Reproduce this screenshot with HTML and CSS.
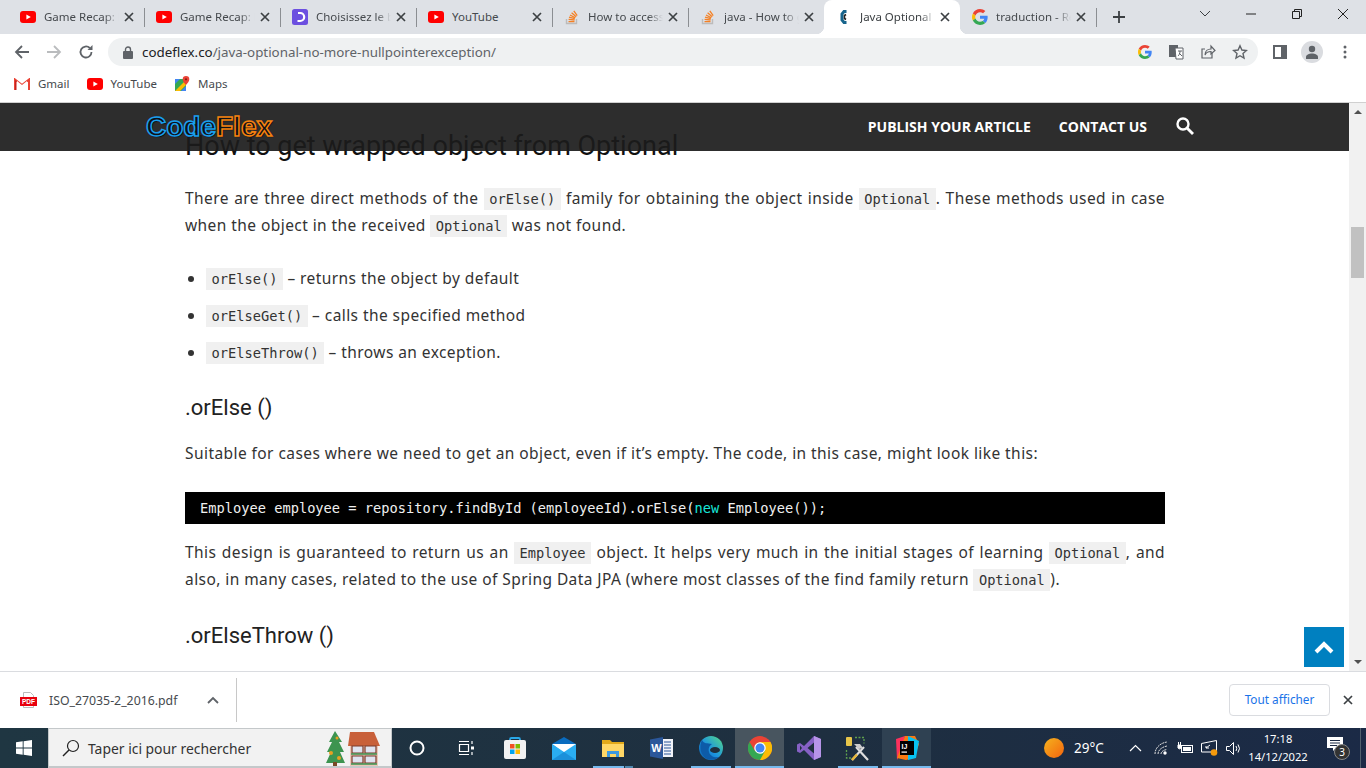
FILE: index.html
```html
<!DOCTYPE html>
<html lang="en">
<head>
    <meta charset="UTF-8">
    <meta name="viewport" content="width=device-width, initial-scale=1.0">
    <title>Java Optional</title>
    <link rel="stylesheet" href="styles.css">
</head>
<body>
    <svg class="defs" width="0" height="0">
        <symbol id="yt" viewBox="0 0 16 12"><rect width="16" height="12" rx="3" fill="#f00"/><path d="M6.4 3.5 10.8 6 6.4 8.5z" fill="#fff"/></symbol>
        <symbol id="so" viewBox="0 0 16 16"><path d="M2.5 10v4.5h10V10" fill="none" stroke="#bcbbbb" stroke-width="1.4"/><path d="M4.5 12.6h6M4.6 10.4l6 .6M5 8.2l5.8 1.5M6 6l5.3 2.8M7.6 3.8l4.6 3.9M9.8 1.8l3.4 4.8" stroke="#f48024" stroke-width="1.3" fill="none"/></symbol>
        <symbol id="g" viewBox="0 0 48 48">
            <path fill="#EA4335" d="M24 9.5c3.54 0 6.71 1.22 9.21 3.6l6.85-6.85C35.9 2.38 30.47 0 24 0 14.62 0 6.51 5.38 2.56 13.22l7.98 6.19C12.43 13.72 17.74 9.5 24 9.5z"/>
            <path fill="#4285F4" d="M46.98 24.55c0-1.57-.15-3.09-.38-4.55H24v9.02h12.94c-.58 2.96-2.26 5.48-4.78 7.18l7.73 6c4.51-4.18 7.09-10.36 7.09-17.65z"/>
            <path fill="#FBBC05" d="M10.53 28.59c-.48-1.45-.76-2.99-.76-4.59s.27-3.14.76-4.59l-7.98-6.19C.92 16.46 0 20.12 0 24c0 3.88.92 7.54 2.56 10.78l7.97-6.19z"/>
            <path fill="#34A853" d="M24 48c6.48 0 11.93-2.13 15.89-5.81l-7.73-6c-2.15 1.45-4.92 2.3-8.16 2.3-6.26 0-11.57-4.22-13.47-9.91l-7.98 6.19C6.51 42.62 14.62 48 24 48z"/>
        </symbol>
        <symbol id="x" viewBox="0 0 10 10"><path d="M1 1l8 8M9 1 1 9" stroke="#3c4043" stroke-width="1.7" fill="none"/></symbol>
    </svg>

    <div class="tabstrip">
        <div class="tab"><svg class="fav" width="16" height="12"><use href="#yt"/></svg><span class="tab-title">Game Recap: Be</span><svg class="tab-x" width="10" height="10"><use href="#x"/></svg></div>
        <div class="tab"><svg class="fav" width="16" height="12"><use href="#yt"/></svg><span class="tab-title">Game Recap: Be</span><svg class="tab-x" width="10" height="10"><use href="#x"/></svg></div>
        <div class="tab"><svg class="fav" width="16" height="16" viewBox="0 0 16 16"><rect width="16" height="16" rx="2.5" fill="#6c4fe0"/><path d="M6 4h2.2a4 4 0 0 1 0 8H5.5" fill="none" stroke="#fff" stroke-width="2.2"/></svg><span class="tab-title">Choisissez le bon</span><svg class="tab-x" width="10" height="10"><use href="#x"/></svg></div>
        <div class="tab"><svg class="fav" width="16" height="12"><use href="#yt"/></svg><span class="tab-title plain">YouTube</span><svg class="tab-x" width="10" height="10"><use href="#x"/></svg></div>
        <div class="tab"><svg class="fav" width="16" height="16"><use href="#so"/></svg><span class="tab-title">How to access the</span><svg class="tab-x" width="10" height="10"><use href="#x"/></svg></div>
        <div class="tab no-sep"><svg class="fav" width="16" height="16"><use href="#so"/></svg><span class="tab-title">java - How to get</span><svg class="tab-x" width="10" height="10"><use href="#x"/></svg></div>
        <div class="tab active"><svg class="fav" width="16" height="16" viewBox="0 0 16 16"><path d="M10.500 2.500H8L6 5v6l2 2.500h2.500" fill="none" stroke="#17648c" stroke-width="3"/><path d="M10 5.500 8.500 6.500v3l1.500 1" fill="none" stroke="#222" stroke-width="1.600"/></svg><span class="tab-title">Java Optional - N</span><svg class="tab-x" width="10" height="10"><use href="#x"/></svg></div>
        <div class="tab"><svg class="fav" width="16" height="16"><use href="#g"/></svg><span class="tab-title">traduction - Rech</span><svg class="tab-x" width="10" height="10"><use href="#x"/></svg></div>
        <svg class="newtab" width="14" height="14" viewBox="0 0 14 14"><path d="M7 1v12M1 7h12" stroke="#3c4043" stroke-width="1.8"/></svg>
        <div class="winctl">
            <svg width="46" height="12" viewBox="0 0 46 12"><path d="M18 3l5 5 5-5" fill="none" stroke="#3c4043"/></svg>
            <svg width="46" height="12" viewBox="0 0 46 12"><path d="M18 6h10" stroke="#222"/></svg>
            <svg width="46" height="12" viewBox="0 0 46 12"><path d="M18.5 3.5h7v7h-7zM20.5 3.500v-2h7v7h-2" fill="none" stroke="#222"/></svg>
            <svg width="46" height="12" viewBox="0 0 46 12"><path d="M18 1l10 10M28 1 18 11" stroke="#222" fill="none"/></svg>
        </div>
    </div>

    <div class="toolbar">
        <svg class="nav-ic" width="16" height="16" viewBox="0 0 16 16"><path d="M15 8H2M8 2 2 8l6 6" fill="none" stroke="#5f6368" stroke-width="1.8"/></svg>
        <svg class="nav-ic" width="16" height="16" viewBox="0 0 16 16"><path d="M1 8h13M8 2l6 6-6 6" fill="none" stroke="#babcbe" stroke-width="1.8"/></svg>
        <svg class="nav-ic" width="16" height="16" viewBox="0 0 16 16"><path d="M13.500 8a5.500 5.500 0 1 1-1.700-4" fill="none" stroke="#5f6368" stroke-width="1.8"/><path d="M14.500 1v5h-5z" fill="#5f6368"/></svg>
        <div class="omnibox">
            <svg width="10" height="13" viewBox="0 0 10 13"><rect y="5" width="10" height="8" rx="1" fill="#5f6368"/><path d="M2.500 5.500V3.500a2.500 2.500 0 0 1 5 0v2" fill="none" stroke="#5f6368" stroke-width="1.400"/></svg>
            <span class="url"><b>codeflex.co</b>/java-optional-no-more-nullpointerexception/</span>
            <svg class="omni-ic" width="14" height="14"><use href="#g"/></svg>
            <svg class="omni-ic" width="16" height="16" viewBox="0 0 16 16"><rect x="1" y="1" width="9" height="12" fill="#5f6368"/><path d="M7 4h8v11H8z" fill="#fff" stroke="#5f6368"/><path d="M3 8l2-4 2 4M10 7h4M12 7c0 3-1 4-2 5M11 9l3 3" fill="none" stroke="#5f6368"/></svg>
            <svg class="omni-ic" width="16" height="16" viewBox="0 0 16 16"><path d="M12 9v5H2V5h3" fill="none" stroke="#5f6368" stroke-width="1.200"/><path d="M5 11c0-4 3-6 6-6V2l4 4.500L11 10V7.500c-3 0-5 1-6 3.500z" fill="none" stroke="#5f6368" stroke-width="1.200"/></svg>
            <svg class="omni-ic" width="16" height="16" viewBox="0 0 16 16"><path d="M8 1.800l1.900 4.200 4.500.5-3.400 3 1 4.500L8 11.700 4 14l1-4.500-3.400-3 4.500-.5z" fill="none" stroke="#5f6368" stroke-width="1.400"/></svg>
        </div>
        <svg class="side-ic" width="14" height="14" viewBox="0 0 14 14"><path d="M1 1h12v12H1z" fill="none" stroke="#5f6368" stroke-width="2"/><rect x="8" y="1" width="5" height="12" fill="#5f6368"/></svg>
        <div class="avatar"><svg width="14" height="14" viewBox="0 0 14 14"><circle cx="7" cy="4" r="3.200" fill="#5f6368"/><path d="M1 14v-2c0-2 3-3.500 6-3.500s6 1.500 6 3.500v2z" fill="#5f6368"/></svg></div>
        <svg class="menu-ic" width="4" height="14" viewBox="0 0 4 14"><circle cx="2" cy="2" r="1.500" fill="#5f6368"/><circle cx="2" cy="7" r="1.500" fill="#5f6368"/><circle cx="2" cy="12" r="1.500" fill="#5f6368"/></svg>
    </div>

    <div class="bookmarks">
        <div class="bm"><svg width="16" height="12" viewBox="0 0 16 12"><path d="M1 12V1.500L8 7l7-5.500V12" fill="none" stroke="#ea4335" stroke-width="2"/><path d="M3 3l5 4 5-4v9H3z" fill="#fff"/><path d="M1 12V2l1.500 1v9z" fill="#c5221f"/></svg>Gmail</div>
        <div class="bm"><svg width="16" height="12"><use href="#yt"/></svg>YouTube</div>
        <div class="bm"><svg width="16" height="16" viewBox="0 0 16 16"><path d="M1 3h11v12H1z" fill="#34a853"/><path d="M1 15 12 4v5l-6 6z" fill="#fbbc04"/><path d="M1 3h5L1 8z" fill="#4285f4"/><path d="M7 15l5-5v5z" fill="#4285f4"/><path d="M12 0a3.300 3.300 0 0 1 3.300 3.300C15.300 6 12 9 12 9S8.700 6 8.700 3.300A3.300 3.300 0 0 1 12 0z" fill="#ea4335"/><circle cx="12" cy="3.300" r="1.100" fill="#8a1c12"/></svg>Maps</div>
    </div>

    <div class="viewport">
        <div class="page">
            <div class="article">
                <h2>How to get wrapped object from Optional</h2>
                <p>There are three direct methods of the <code>orElse()</code> family for obtaining the object inside <code>Optional</code>. These methods used in case when the object in the received <code>Optional</code> was not found.</p>
                <ul>
                    <li><code>orElse()</code> – returns the object by default</li>
                    <li><code>orElseGet()</code> – calls the specified method</li>
                    <li><code>orElseThrow()</code> – throws an exception.</li>
                </ul>
                <h3>.orElse ()</h3>
                <p class="after-h3">Suitable for cases where we need to get an object, even if it’s empty. The code, in this case, might look like this:</p>
                <pre>Employee employee = repository.findById (employeeId).orElse(<span class="kw">new</span> Employee());</pre>
                <p class="after-pre">This design is guaranteed to return us an <code>Employee</code> object. It helps very much in the initial stages of learning <code>Optional</code>, and also, in many cases, related to the use of Spring Data JPA (where most classes of the find family return <code>Optional</code>).</p>
                <h3 class="after-text">.orElseThrow ()</h3>
            </div>
            <div class="site-header">
                <div class="logo"><span class="logo-a">Code</span><span class="logo-b">Flex</span></div>
                <div class="site-nav">
                    <span>PUBLISH YOUR ARTICLE</span>
                    <span>CONTACT US</span>
                    <svg width="18" height="18" viewBox="0 0 18 18"><circle cx="7" cy="7" r="5.500" fill="none" stroke="#fff" stroke-width="2.400"/><path d="M11 11l6 6" stroke="#fff" stroke-width="2.800"/></svg>
                </div>
            </div>
            <div class="to-top"><svg width="20" height="13" viewBox="0 0 20 13"><path d="M2 11l8-8 8 8" fill="none" stroke="#fff" stroke-width="4"/></svg></div>
        </div>
        <div class="scrollbar">
            <div class="arrow-up"></div>
            <div class="thumb"></div>
            <div class="arrow-down"></div>
        </div>
    </div>

    <div class="downloads">
        <svg class="pdf" width="17" height="16" viewBox="0 0 17 16"><path d="M3.500 7V.5h7l3 3V7M3.500 14v1.500h10V14" fill="none" stroke="#bbb"/><rect y="5" width="17" height="9" fill="#e8000d"/><text x="8.500" y="12" class="pdf-text">PDF</text></svg>
        <span class="dl-name">ISO_27035-2_2016.pdf</span>
        <svg class="dl-chev" width="12" height="8" viewBox="0 0 12 8"><path d="M1 7l5-5 5 5" fill="none" stroke="#5f6368" stroke-width="1.800"/></svg>
        <div class="dl-sep"></div>
        <div class="dl-all">Tout afficher</div>
        <svg class="dl-x" width="10" height="10"><use href="#x"/></svg>
    </div>

    <div class="taskbar">
        <div class="start"><svg width="16" height="16" viewBox="0 0 16 16"><path d="M0 2.300 6.700 1.300V7.600H0zM7.600 1.200 16 0v7.600H7.600zM0 8.400h6.700v6.300L0 13.700zM7.600 8.400H16V16l-8.400-1.200z" fill="#fff"/></svg></div>
        <div class="search">
            <svg width="18" height="18" viewBox="0 0 18 18"><circle cx="11" cy="7" r="5.500" fill="none" stroke="#222" stroke-width="1.200"/><path d="M7 11l-6 6" stroke="#222" stroke-width="1.400"/></svg>
            <span>Taper ici pour rechercher</span>
            <svg class="xmas" width="58" height="36" viewBox="0 0 58 36"><path d="M11 1 5 12h3L3 22h4L2 33h19l-5-11h4l-5-10h3z" fill="#3d9450"/><rect x="9" y="32" width="4" height="4" fill="#7a4a26"/><circle cx="7" cy="23" r="2" fill="#e8a020"/><circle cx="15" cy="28" r="2" fill="#e8a020"/><circle cx="13" cy="8" r="1.500" fill="#e8a020"/><path d="M26 14h28v22H26z" fill="#ecc7b8"/><path d="M26 2h24l6 14H24z" fill="#c8603a"/><path d="M28 16h11v7H28zM41 16h11v7H41zM28 26h11v7H28zM41 26h11v7H41z" fill="#dfe3f0" stroke="#7b3a2a" stroke-width="1.200"/><path d="M27 24h26M27 34h26" stroke="#3c9450" stroke-width="1.600"/></svg>
        </div>
        <div class="apps">
            <div class="app"><svg width="16" height="16" viewBox="0 0 16 16"><circle cx="8" cy="8" r="6.500" fill="none" stroke="#fff" stroke-width="2"/></svg></div>
            <div class="app"><svg width="16" height="16" viewBox="0 0 16 16"><path d="M1.500 4.500h9v7h-9z" fill="none" stroke="#fff" stroke-width="1.200"/><path d="M1 1.500h10M1 14.500h10M14 1v3M14 12v3" stroke="#fff" stroke-width="1.200"/><rect x="13" y="6.500" width="3" height="3" fill="#fff"/></svg></div>
            <div class="app"><svg width="24" height="24" viewBox="0 0 24 24"><path d="M7 5V3.500A1.500 1.500 0 0 1 8.500 2h7A1.500 1.500 0 0 1 17 3.500V5" fill="none" stroke="#29a8e8" stroke-width="1.800"/><rect x="1" y="4" width="22" height="19" rx="2" fill="#f2f2f2"/><rect x="7" y="8" width="4.500" height="4.500" fill="#f25022"/><rect x="12.500" y="8" width="4.500" height="4.500" fill="#7fba00"/><rect x="7" y="13.500" width="4.500" height="4.500" fill="#00a4ef"/><rect x="12.500" y="13.500" width="4.500" height="4.500" fill="#ffb900"/></svg></div>
            <div class="app"><svg width="24" height="23" viewBox="0 0 24 23"><path d="M12 0 0 7v16h24V7z" fill="#0a6cbf"/><path d="M0 7h24v9l-12 0z" fill="#fff"/><path d="M0 7l12 8 12-8v16H0z" fill="#2aaef2"/><path d="M0 23l12-8 12 8z" fill="#1b90da"/></svg></div>
            <div class="app run-split"><svg width="22" height="18" viewBox="0 0 22 18"><path d="M0 1h8l2 2h12v15H0z" fill="#e2a91a"/><path d="M0 5h22v13H0z" fill="#ffd766"/><path d="M5 18v-6h12v6h-3v-3H8v3z" fill="#3f9ae0"/></svg></div>
            <div class="app"><svg width="23" height="22" viewBox="0 0 23 22"><rect x="8" y="2" width="15" height="18" fill="#f1f3f9"/><path d="M14 5h7M14 8h7M14 11h7M14 14h7M14 17h7" stroke="#2b579a" stroke-width="1.200"/><path d="M0 2.500 13 0v22L0 19.500z" fill="#2b579a"/><text x="6.500" y="15" class="word-w">W</text></svg></div>
            <div class="app run"><svg width="24" height="24" viewBox="0 0 24 24"><defs><linearGradient id="edge" x1="1" y1="0" x2="0" y2="1"><stop offset="0" stop-color="#58dc84"/><stop offset=".55" stop-color="#1b93e0"/><stop offset="1" stop-color="#0d5ba8"/></linearGradient></defs><circle cx="12" cy="12" r="12" fill="url(#edge)"/><path d="M3 4C0 10 1 19 8 23c4 1.500 9 .5 12-2-5 1-9-1-10-5-1-3 0-6 3-8-5-1-8 0-10-4z" fill="#0d5ba8"/><ellipse cx="16" cy="14" rx="5" ry="3" fill="#1f2f3d"/></svg></div>
            <div class="app on"><svg width="24" height="24" viewBox="0 0 48 48"><circle cx="24" cy="24" r="24" fill="#ea4335"/><path d="M24 48A24 24 0 0 0 45 12H24l-8 4z" fill="#fbbc05"/><path d="M24 48 35 28 14 30 3 12A24 24 0 0 0 24 48z" fill="#34a853"/><circle cx="24" cy="24" r="11.500" fill="#fff"/><circle cx="24" cy="24" r="9" fill="#4285f4"/></svg></div>
            <div class="app"><svg width="24" height="24" viewBox="0 0 24 24"><path d="M17 0 24 3v18l-7 3L7 14l-4 3-3-1.500v-7L3 7l4 3z" fill="#8661c5"/><path d="M17 6.500v11L10.500 12z" fill="#1f2f3d"/><path d="M17 0l7 3v18l-7 3z" fill="#b794e8"/><path d="M3 9.500v5L5 12z" fill="#1f2f3d"/></svg></div>
            <div class="app run"><svg width="25" height="25" viewBox="0 0 25 25"><rect x="1" y="1" width="6" height="9" rx="1" fill="#e8c64a"/><path d="M10 1.500h9v6M1.500 14v8h6" fill="none" stroke="#5fa04e" stroke-width="1.300" stroke-dasharray="2 1.500"/><path d="M7 24 19 11M23 24 11 11" stroke="#ddd" stroke-width="2.200"/><path d="M7 24l5-5.500" stroke="#e8b73a" stroke-width="2.600"/><path d="M9 8h6l3 4-4 1z" fill="#ccc"/></svg></div>
            <div class="app on-light"><svg width="24" height="24" viewBox="0 0 24 24"><path d="M1 3 10 0 8 12 2 24z" fill="#fe315d"/><path d="M10 0h10l4 8-5 14-8 2-9-2z" fill="#f97a12"/><path d="M13 0l11 5-3 17-8 2z" fill="#07c3f2"/><rect x="5" y="5" width="14" height="14" fill="#000"/><text x="6.500" y="12.500" class="ij-text">IJ</text><rect x="6.500" y="15.500" width="5.500" height="1.200" fill="#fff"/></svg></div>
        </div>
        <div class="tray">
            <div class="sun"></div>
            <span class="temp">29°C</span>
            <svg class="tray-chev" width="13" height="8" viewBox="0 0 13 8"><path d="M1 7l5.500-5.500L12 7" fill="none" stroke="#fff" stroke-width="1.200"/></svg>
            <svg class="wifi" width="14" height="14" viewBox="0 0 14 14"><path d="M1 13C1 7 6 2 13 1M4 13c0-4 4-7 9-8M7 13c0-2 2-4 6-4.500" fill="none" stroke="#ddd" stroke-width="1" stroke-dasharray="2 .7"/><circle cx="11" cy="12" r="1.700" fill="#fff"/></svg>
            <svg class="power" width="16" height="12" viewBox="0 0 16 12"><rect x="4.500" y="3.500" width="11" height="7" fill="none" stroke="#fff"/><rect x="6" y="5" width="8" height="4" fill="#fff"/><path d="M1 3v3a2 2 0 0 0 3 0V3zM1.500 0v3M3.500 0v3" stroke="#fff" fill="#fff"/></svg>
            <svg class="display" width="17" height="16" viewBox="0 0 17 16"><path d="M.5 3.500 15.500.500V12H.5z" fill="none" stroke="#fff"/><path d="M5 8l4-3M8 8H5V6" fill="none" stroke="#fff"/><circle cx="13" cy="12.500" r="3.300" fill="#f59a0c"/></svg>
            <svg class="volume" width="16" height="13" viewBox="0 0 16 13"><path d="M.5 4.500h3l4-4v12l-4-4h-3z" fill="none" stroke="#fff"/><path d="M10 4q1.500 2.500 0 5M12 2.500q3 4 0 8" fill="none" stroke="#fff"/></svg>
            <div class="clock"><span>17:18</span><span>14/12/2022</span></div>
            <div class="notif">
                <svg width="16" height="14" viewBox="0 0 16 14"><path d="M0 0h16v11H9l-3 3v-3H0z" fill="#fff"/><path d="M3 3.500h10M3 6h10M3 8.500h7" stroke="#1d2b45"/></svg>
                <span class="notif-count">3</span>
            </div>
            <div class="show-desktop"></div>
        </div>
    </div>
</body>
</html>
```

FILE: styles.css
```css
html, body {
    margin: 0;
    height: 768px;
    overflow: hidden;
}
body {
    display: flex;
    flex-direction: column;
    background: #fff;
    font-family: "Noto Sans", "Open Sans", sans-serif;
}
.defs {
    display: none;
}

/* browser chrome */
.tabstrip {
    height: 34px;
    flex: none;
    display: flex;
    align-items: center;
    padding-left: 8px;
    background: #dee1e6;
}
.tab {
    width: 136px;
    height: 34px;
    flex: none;
    box-sizing: border-box;
    display: flex;
    align-items: center;
    padding: 0 10px 0 12px;
    font-size: 11.500px;
    color: #45494d;
    position: relative;
}
.tab::after {
    content: "";
    position: absolute;
    right: -1px;
    top: 8px;
    width: 1px;
    height: 19px;
    background: #8b8e92;
}
.tab.no-sep::after {
    display: none;
}
.tab.active {
    background: #fff;
    border-radius: 8px 8px 0 0;
    color: #3c4043;
}
.tab.active::before, .tab.active::after {
    content: "";
    position: absolute;
    top: auto;
    bottom: 0;
    width: 8px;
    height: 8px;
    background: radial-gradient(circle at 0 0, transparent 8px, #fff 8.500px);
}
.tab.active::before {
    left: -8px;
}
.tab.active::after {
    right: -8px;
    background: radial-gradient(circle at 100% 0, transparent 8px, #fff 8.500px);
}
.fav {
    flex: none;
    margin-right: 8px;
}
.tab-title {
    flex: 1;
    overflow: hidden;
    white-space: nowrap;
    margin-top: -2px;
    -webkit-mask-image: linear-gradient(to right, #000 80%, transparent 100%);
    mask-image: linear-gradient(to right, #000 80%, transparent 100%);
}
.tab-title.plain {
    -webkit-mask-image: none;
    mask-image: none;
}
.tab-x {
    flex: none;
    margin-left: 5px;
}
.newtab {
    margin-left: 16px;
}
.winctl {
    margin-left: auto;
    display: flex;
    align-items: center;
    margin-top: -6px;
}
.winctl svg {
    display: block;
}

.toolbar {
    height: 34px;
    flex: none;
    box-sizing: border-box;
    display: flex;
    align-items: center;
    background: #fff;
    padding: 2px 19px 0 14px;
}
.nav-ic {
    margin-right: 16px;
    flex: none;
}
.nav-ic:nth-child(3) {
    margin-right: 14px;
}
.omnibox {
    flex: 1;
    height: 28px;
    border-radius: 14px;
    background: #eff1f2;
    display: flex;
    align-items: center;
    padding: 0 10px 0 15px;
    font-size: 13.350px;
    color: #5f6368;
}
.url {
    margin-left: 9px;
    flex: 1;
    white-space: nowrap;
}
.url b {
    font-weight: 400;
    color: #202124;
}
.omni-ic {
    margin-left: 16px;
    flex: none;
}
.side-ic {
    margin-left: 15px;
    flex: none;
}
.avatar {
    width: 22px;
    height: 22px;
    border-radius: 50%;
    margin-left: 14px;
    background: #dadce0;
    display: flex;
    align-items: center;
    justify-content: center;
    flex: none;
}
.menu-ic {
    margin-left: 20px;
    flex: none;
}

.bookmarks {
    height: 35px;
    flex: none;
    box-sizing: border-box;
    display: flex;
    align-items: center;
    gap: 17px;
    padding: 0 0 3px 14px;
    border-bottom: 1px solid #d0d0d0;
    font-size: 11.500px;
    color: #45494d;
}
.bm {
    display: flex;
    align-items: center;
    gap: 8px;
}

/* page */
.viewport {
    flex: 1;
    min-height: 0;
    display: flex;
}
.page {
    flex: 1;
    position: relative;
    overflow: hidden;
}
.article {
    padding: 25px 0 0 185px;
    width: 980px;
    font-size: 15.500px;
    letter-spacing: 0.43px;
    line-height: 27px;
    color: #333;
}
.article h2 {
    margin: 0;
    font: 400 27px/36px Roboto, sans-serif;
    letter-spacing: 0;
    color: #111;
}
.article h3 {
    margin: 27px 0 0;
    font: 400 22px/30px Roboto, sans-serif;
    letter-spacing: 0;
    color: #222;
}
.article h3.after-text {
    margin-top: 28px;
}
.article p {
    margin: 20.500px 0 0;
    text-align: justify;
}
.article p.after-h3 {
    margin-top: 17.500px;
}
.article p.after-pre {
    margin-top: 15.500px;
}
.article ul {
    margin: 26px 0 0;
    padding: 0 0 0 21px;
}
.article li {
    margin-bottom: 10px;
}
.article li:last-child {
    margin-bottom: 0;
}
code {
    font-family: "DejaVu Sans Mono", monospace;
    font-size: 13.700px;
    line-height: 1;
    letter-spacing: 0;
    background: #f0f0f0;
    padding: 3px 5.500px;
}
.article pre {
    margin: 24.500px 0 0;
    height: 32px;
    box-sizing: border-box;
    padding: 0 15px;
    background: #000;
    color: #f0f0f0;
    font: 13.700px/32px "DejaVu Sans Mono", monospace;
    letter-spacing: 0;
}
.kw {
    color: #18e6d8;
}

.site-header {
    position: absolute;
    top: 0;
    left: 0;
    right: 0;
    height: 48px;
    display: flex;
    align-items: center;
    justify-content: space-between;
    padding: 0 155px 0 146px;
    background: rgba(27, 27, 27, 0.92);
}
.logo {
    font: 700 28px/1 "Liberation Sans", sans-serif;
    color: #0c1116;
    text-shadow: 1px 1px 1px #000;
}
.logo-a {
    -webkit-text-stroke: 1.500px #1a9fee;
}
.logo-b {
    -webkit-text-stroke: 1.500px #f58210;
}
.site-nav {
    display: flex;
    align-items: center;
    color: #fff;
    font: 700 14px "Open Sans", sans-serif;
    gap: 28px;
    margin-top: -2px;
}
.site-nav svg {
    margin-left: 1px;
}
.to-top {
    position: absolute;
    right: 5px;
    bottom: 4px;
    width: 40px;
    height: 40px;
    background: #0080c0;
    display: flex;
    align-items: center;
    justify-content: center;
}

.scrollbar {
    width: 17px;
    flex: none;
    background: #f1f1f1;
    display: flex;
    flex-direction: column;
    align-items: center;
}
.arrow-up {
    margin-top: 7px;
    border: 4px solid transparent;
    border-top: 0;
    border-bottom: 4px solid #505050;
}
.thumb {
    width: 13px;
    height: 51px;
    margin-top: 113px;
    background: #c1c1c1;
}
.arrow-down {
    margin-top: auto;
    margin-bottom: 7px;
    border: 4px solid transparent;
    border-bottom: 0;
    border-top: 4px solid #505050;
}

/* download shelf */
.downloads {
    height: 57px;
    flex: none;
    box-sizing: border-box;
    display: flex;
    align-items: center;
    padding: 0 13px 0 20px;
    border-top: 1px solid #dadce0;
    font-size: 12.300px;
    color: #45494d;
}
.pdf-text {
    font: 700 6.500px "Liberation Sans", sans-serif;
    fill: #fff;
    text-anchor: middle;
}
.dl-name {
    margin-left: 12px;
    width: 158px;
    white-space: nowrap;
}
.dl-sep {
    width: 1px;
    height: 44px;
    margin-left: 17px;
    background: #c8c8c8;
}
.dl-all {
    margin-left: auto;
    width: 101px;
    height: 32px;
    box-sizing: border-box;
    border: 1px solid #dadce0;
    border-radius: 4px;
    display: flex;
    align-items: center;
    justify-content: center;
    padding-bottom: 2px;
    font-size: 11.800px;
    color: #1a73e8;
}
.dl-x {
    margin-left: 13px;
}

/* windows taskbar */
.taskbar {
    height: 40px;
    flex: none;
    display: flex;
    background: linear-gradient(to right, #1f3642, #1e2f40 60%, #1b2a46);
    color: #fff;
}
.start {
    width: 48px;
    flex: none;
    display: flex;
    align-items: center;
    justify-content: center;
}
.search {
    width: 344px;
    flex: none;
    box-sizing: border-box;
    display: flex;
    align-items: center;
    padding-left: 13px;
    background: #f2f2f2;
    border: 1px solid #c4c8ca;
    border-bottom-width: 2px;
    color: #333;
    font-size: 13.900px;
}
.search span {
    margin-left: 8px;
    margin-top: 1px;
}
.xmas {
    margin-left: auto;
    margin-right: 9px;
    align-self: flex-end;
}
.apps {
    display: flex;
    flex: none;
}
.app {
    width: 49px;
    height: 40px;
    box-sizing: border-box;
    display: flex;
    align-items: center;
    justify-content: center;
    position: relative;
}
.app.run::after, .app.run-split::after {
    content: "";
    position: absolute;
    left: 5px;
    bottom: 0;
    width: 40px;
    height: 2px;
    background: #76b9ed;
}
.app.run-split::after {
    background: linear-gradient(to right, #76b9ed 31px, #1f3040 31px, #1f3040 32px, #4f86ad 32px);
}
.app.on {
    background: #48555f;
    box-shadow: inset 0 -2px 0 #76b9ed;
}
.app.on-light {
    background: #2f4152;
    box-shadow: inset 0 -2px 0 #76b9ed;
}
.tray {
    flex: 1;
    display: flex;
    align-items: center;
    padding-left: 113px;
    position: relative;
}
.sun {
    width: 20px;
    height: 20px;
    border-radius: 50%;
    background: linear-gradient(135deg, #f4b31e, #f4640e);
    flex: none;
}
.temp {
    margin-left: 10px;
    width: 29px;
    font-size: 13.500px;
    white-space: nowrap;
}
.tray-chev {
    margin-left: 26px;
}
.wifi {
    margin-left: 12px;
}
.power {
    margin-left: 9px;
}
.display {
    margin-left: 8px;
}
.volume {
    margin-left: 8px;
}
.clock {
    width: 60px;
    margin-left: 6px;
    display: flex;
    flex-direction: column;
    align-items: center;
    font-size: 11.200px;
    line-height: 18px;
    white-space: nowrap;
}
.notif {
    position: relative;
    margin-left: 19px;
    margin-top: -8px;
    display: flex;
}
.notif-count {
    position: absolute;
    left: 7px;
    top: 7px;
    width: 16px;
    height: 16px;
    border-radius: 50%;
    border: 1px solid #888;
    box-sizing: border-box;
    background: #333;
    font-size: 10px;
    line-height: 14px;
    text-align: center;
}
.show-desktop {
    position: absolute;
    right: 5px;
    top: 0;
    width: 1px;
    height: 40px;
    background: #50606e;
}
.word-w {
    font: 700 11px "Liberation Sans", sans-serif;
    fill: #fff;
    text-anchor: middle;
}
.ij-text {
    font: 700 7px "Liberation Sans", sans-serif;
    fill: #fff;
}
```
